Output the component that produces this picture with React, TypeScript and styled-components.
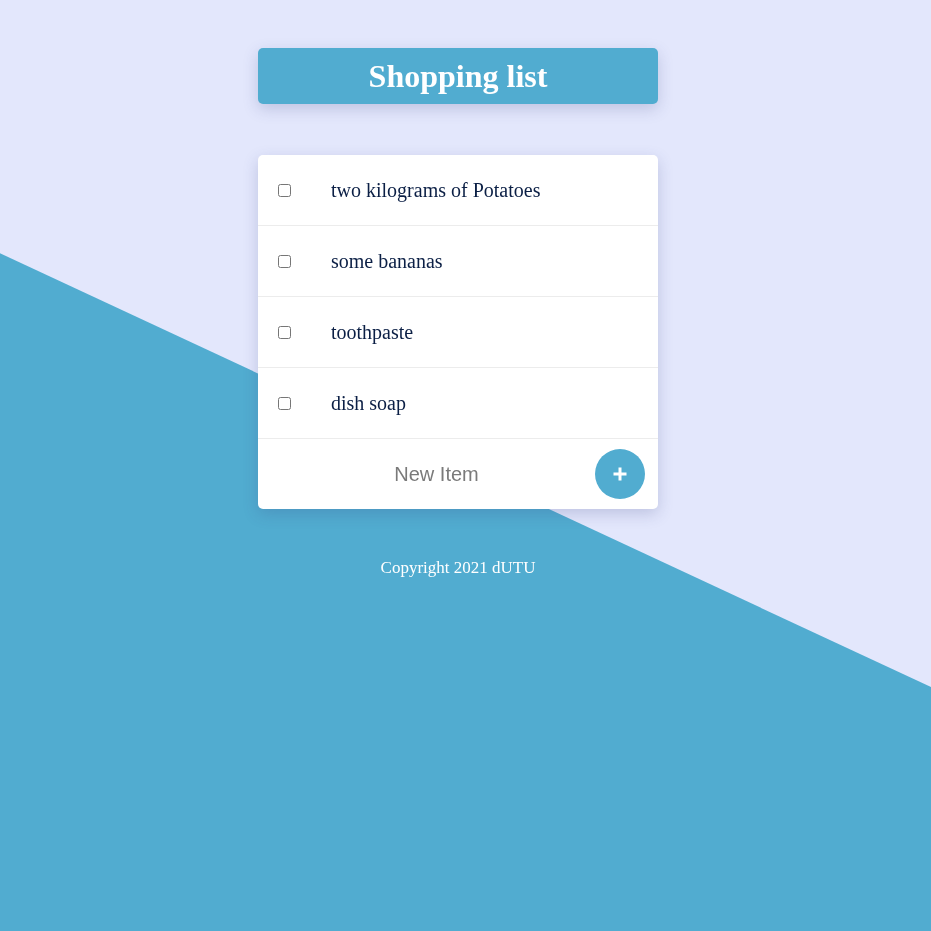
import React from "react";
import styled, { createGlobalStyle } from "styled-components";

const GlobalStyle = createGlobalStyle`
  html, body {
    margin: 0;
    padding: 0;
    min-height: 100%;
  }
  body {
    background-color: #e3e7fc;
    font-family: "Liberation Serif", "Times New Roman", serif;
    min-height: 100vh;
  }
  body::before {
    content: "";
    position: fixed;
    inset: 0;
    background-color: #51acd0;
    clip-path: polygon(0 27.2%, 100% 73.8%, 100% 100%, 0 100%);
    z-index: -1;
  }
`;

const Page = styled.div`
  display: flex;
  flex-direction: column;
  align-items: center;
  padding: 48px 15px 0 0;
`;

const Header = styled.header`
  width: 400px;
  height: 56px;
  background: #51acd0;
  border-radius: 5px;
  box-shadow: 0 5px 15px rgba(60, 70, 130, 0.22);
  display: flex;
  align-items: center;
  justify-content: center;
`;

const Title = styled.h1`
  margin: 0;
  color: #fff;
  font-size: 32px;
  font-weight: 700;
  line-height: 1;
`;

const Card = styled.div`
  margin-top: 51px;
  width: 400px;
  background: #fff;
  border-radius: 5px;
  box-shadow: 0 5px 15px rgba(60, 70, 130, 0.22);
  overflow: hidden;
`;

const Row = styled.label`
  display: flex;
  align-items: center;
  height: 70px;
  border-bottom: 1px solid #ececec;
  padding-left: 20px;
`;

const Check = styled.input`
  width: 13px;
  height: 13px;
  margin: 0 40px 0 0;
`;

const ItemText = styled.span`
  font-size: 20px;
  color: #0b1f45;
`;

const Footer = styled.form`
  display: flex;
  align-items: center;
  height: 70px;
  padding: 0 13px 0 20px;
`;

const NewItem = styled.input`
  flex: 1;
  min-width: 0;
  border: none;
  outline: none;
  text-align: center;
  font-family: "Liberation Sans", Arial, sans-serif;
  font-size: 20px;
  color: #333;
  background: transparent;
  &::placeholder {
    color: #7a7a7a;
  }
`;

const AddButton = styled.button`
  width: 50px;
  height: 50px;
  border-radius: 50%;
  border: none;
  background: #51acd0;
  color: #fff;
  display: flex;
  align-items: center;
  justify-content: center;
  padding: 0;
  cursor: pointer;
`;

const Copyright = styled.p`
  margin: 49px 0 0;
  color: #fff;
  font-size: 17px;
`;

const items = ["two kilograms of Potatoes", "some bananas", "toothpaste", "dish soap"];

export default function App() {
  return (
    <>
      <GlobalStyle />
      <Page>
        <Header>
          <Title>Shopping list</Title>
        </Header>
        <Card>
          {items.map((item) => (
            <Row key={item}>
              <Check type="checkbox" />
              <ItemText>{item}</ItemText>
            </Row>
          ))}
          <Footer onSubmit={(e) => e.preventDefault()}>
            <NewItem placeholder="New Item" />
            <AddButton type="submit">
              <svg width="16" height="16" viewBox="0 0 16 16">
                <path d="M8 1.5v13M1.5 8h13" stroke="#fff" strokeWidth="3" />
              </svg>
            </AddButton>
          </Footer>
        </Card>
        <Copyright>Copyright 2021 dUTU</Copyright>
      </Page>
    </>
  );
}
